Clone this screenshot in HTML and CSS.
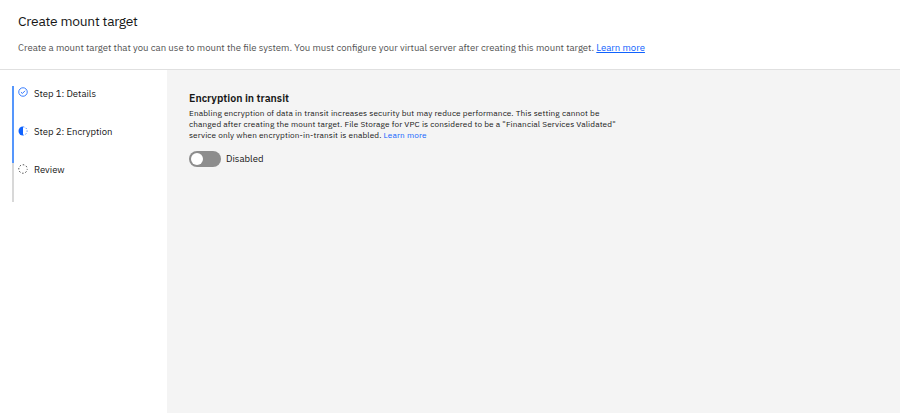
FILE: index.html
```html
<!DOCTYPE html>
<html lang="en">
<head>
<meta charset="utf-8">
<title>Create mount target</title>
<link rel="stylesheet" href="styles.css">
</head>
<body>
<div class="page">
  <header class="header">
    <h1 class="title">Create mount target</h1>
    <p class="description"><span class="intro">Create a mount target that you can use to mount the file system. You must configure your virtual server after creating this mount target.</span> <a class="link underlined" href="#">Learn more</a></p>
  </header>
  <div class="layout">
    <nav class="sidebar">
      <ol class="steps">
        <li class="step done">
          <svg class="icon" viewBox="0 0 16 16"><circle cx="8" cy="8" r="6.8" fill="none" stroke="#0f62fe" stroke-width="1.3"/><path d="M4.7 8.2 7 10.4 11.3 6" fill="none" stroke="#0f62fe" stroke-width="1.4"/></svg>
          <span>Step 1: Details</span>
        </li>
        <li class="step done">
          <svg class="icon" viewBox="0 0 16 16"><path d="M8 .8a7.2 7.2 0 0 0 0 14.4z" fill="#0f62fe"/><path d="M8 1.4a6.6 6.6 0 0 1 0 13.2" fill="none" stroke="#0f62fe" stroke-width="1.2" stroke-dasharray="2.2 2.4"/></svg>
          <span>Step 2: Encryption</span>
        </li>
        <li class="step">
          <svg class="icon" viewBox="0 0 16 16"><circle cx="8" cy="8" r="6.8" fill="none" stroke="#161616" stroke-width="1.3" stroke-dasharray="2.4 2.94" stroke-dashoffset="1.2"/></svg>
          <span class="review">Review</span>
        </li>
      </ol>
    </nav>
    <main class="content">
      <h2 class="heading">Encryption in transit</h2>
      <p class="help"><span class="line first">Enabling encryption of data in transit increases security but may reduce performance. This setting cannot be</span> <span class="line second">changed after creating the mount target. File Storage for VPC is considered to be a "Financial Services Validated"</span> <span class="line third">service only when encryption-in-transit is enabled. <a class="link" href="#">Learn more</a></span></p>
      <div class="toggle-row">
        <button class="toggle" type="button" role="switch" aria-checked="false" aria-label="Encryption in transit"><span class="knob"></span></button>
        <span class="state">Disabled</span>
      </div>
    </main>
  </div>
</div>
</body>
</html>
```

FILE: styles.css
```css
* {
  box-sizing: border-box;
}

body {
  margin: 0;
  background: #fff;
  color: #161616;
  font-family: "IBM Plex Sans", Roboto, sans-serif;
}

h1, h2, p, ol {
  margin: 0;
  padding: 0;
}

.page {
  display: flex;
  flex-direction: column;
  height: 413px;
}

.header {
  flex: none;
  height: 70px;
  padding: 12px 18px 0;
  border-bottom: 1px solid #e0e0e0;
}

.title {
  font-size: 13.8px;
  font-weight: 400;
  letter-spacing: -0.24px;
  line-height: 18px;
}

.description {
  margin-top: 11px;
  color: #525252;
  font-size: 9.56px;
  line-height: 13px;
  white-space: nowrap;
}

.link {
  color: #0f62fe;
  text-decoration: none;
}

.underlined {
  text-decoration: underline;
}

.layout {
  display: flex;
  flex: 1;
}

.sidebar {
  width: 167px;
  padding: 16px 0 0 12px;
}

.steps {
  list-style: none;
}

.step {
  display: flex;
  gap: 6px;
  height: 38.5px;
  padding-left: 4px;
  border-left: 2px solid #d8d8d8;
  font-size: 9.5px;
  line-height: 15px;
}

.step.done {
  border-left-color: #5596fc;
}

.step + .step {
  line-height: 14.4px;
}

.icon {
  width: 10px;
  height: 10px;
  margin-top: 1px;
}

.content {
  flex: 1;
  padding: 21px 22px;
  background: #f4f4f4;
}

.heading {
  font-size: 10.65px;
  font-weight: 600;
  line-height: 15px;
}

.help {
  margin-top: 2.4px;
  font-size: 8.22px;
  letter-spacing: 0.12px;
  line-height: 10.7px;
}

.line {
  display: block;
  white-space: nowrap;
}

.toggle-row {
  display: flex;
  align-items: center;
  gap: 5px;
  margin-top: 10.5px;
  font-size: 9.55px;
  line-height: 16px;
}

.toggle {
  width: 32px;
  height: 16px;
  padding: 2px;
  border: 0;
  border-radius: 8px;
  background: #8d8d8d;
}

.knob {
  display: block;
  width: 12px;
  height: 12px;
  border-radius: 50%;
  background: #fff;
}
```
